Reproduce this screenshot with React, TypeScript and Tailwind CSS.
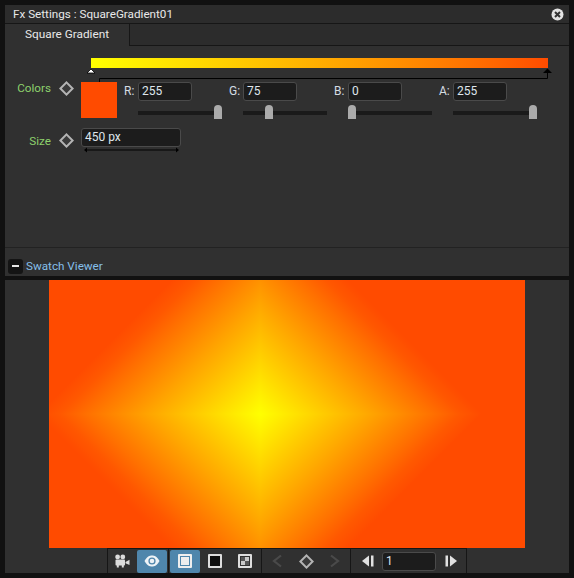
import React from "react";

const Diamond = ({ size = 15 }: { size?: number }) => (
  <svg width={size} height={size} viewBox="0 0 15 15" className="shrink-0">
    <path d="M7.5 1.4 L13.6 7.5 L7.5 13.6 L1.4 7.5 Z" fill="#3a3a3a" stroke="#b4b4b4" strokeWidth="2" />
  </svg>
);

const Field = ({ value, className }: { value: string; className: string }) => (
  <div className={`h-[19px] rounded-[3px] border border-[#4a4a4a] bg-[#1c1c1c] pl-[3px] text-[12px] leading-[17px] text-[#dfe6ec] ${className}`}>
    {value}
  </div>
);

const Channel = ({ label, value, thumb, className }: { label: string; value: string; thumb: string; className: string }) => (
  <div className={`grid grid-cols-[14px_84px] ${className}`}>
    <span className="text-[12px] leading-[19px] text-[#d5dde3]">{label}</span>
    <Field value={value} className="w-[54px]" />
    <div className="col-start-2 relative mt-[4px] h-[14px]">
      <div className="mt-[6px] h-[4px] bg-[#1a1a1a]" />
      <div className={`absolute top-0 h-[14px] w-[8px] rounded-t-[4px] bg-[#ababab] ${thumb}`} />
    </div>
  </div>
);

const TB = ({ active, children, className }: { active?: boolean; children: React.ReactNode; className: string }) => (
  <div className={`flex h-[23px] items-center justify-center rounded-[2px] ${active ? "bg-[#4f86ac]" : ""} ${className}`}>
    {children}
  </div>
);

const SquareGradient = () => {
  const stops = (
    <>
      <stop offset="0" stopColor="#ffff00" />
      <stop offset="0.5" stopColor="#ffa500" />
      <stop offset="0.78" stopColor="#ff7000" />
      <stop offset="0.9" stopColor="#ff5800" />
      <stop offset="1" stopColor="#ff4b00" />
    </>
  );
  const cx = 211;
  const cy = 134;
  const r = 222;
  return (
    <svg width="476" height="268" viewBox="0 0 476 268" className="block">
      <defs>
        <linearGradient id="q1" gradientUnits="userSpaceOnUse" x1={cx} y1={cy} x2={cx - r / 2} y2={cy - r / 2}>{stops}</linearGradient>
        <linearGradient id="q2" gradientUnits="userSpaceOnUse" x1={cx} y1={cy} x2={cx + r / 2} y2={cy - r / 2}>{stops}</linearGradient>
        <linearGradient id="q3" gradientUnits="userSpaceOnUse" x1={cx} y1={cy} x2={cx - r / 2} y2={cy + r / 2}>{stops}</linearGradient>
        <linearGradient id="q4" gradientUnits="userSpaceOnUse" x1={cx} y1={cy} x2={cx + r / 2} y2={cy + r / 2}>{stops}</linearGradient>
      </defs>
      <rect x="0" y="0" width={cx} height={cy} fill="url(#q1)" />
      <rect x={cx} y="0" width={476 - cx} height={cy} fill="url(#q2)" />
      <rect x="0" y={cy} width={cx} height={cy} fill="url(#q3)" />
      <rect x={cx} y={cy} width={476 - cx} height={cy} fill="url(#q4)" />
    </svg>
  );
};

export default function App() {
  return (
    <div className="flex h-[578px] w-[574px] flex-col gap-[4px] bg-[#111111] p-[5px] font-['Roboto','Noto_Sans',sans-serif]">
      {/* Fx settings panel */}
      <div className="flex h-[271px] flex-col bg-[#303030]">
        <div className="flex h-[19px] items-center justify-between border-b border-[#161616] bg-[#2c2c2c] pl-[8px] pr-[5px]">
          <span className="text-[11.7px] leading-[18px] text-[#e8e8e8]">Fx Settings : SquareGradient01</span>
          <svg width="13" height="13" viewBox="0 0 13 13">
            <circle cx="6.5" cy="6.5" r="6" fill="#e2e2e2" />
            <path d="M4 4 L9 9 M9 4 L4 9" stroke="#333" strokeWidth="2" />
          </svg>
        </div>
        <div className="flex h-[22px] bg-[#2c2c2c]">
          <div className="w-[124px] bg-[#303030] pl-[20px] text-[11.8px] leading-[21px] text-[#e8e8e8]">Square Gradient</div>
          <div className="flex-1 border-b border-l border-[#161616]" />
        </div>
        <div className="flex flex-1 flex-col pt-[12px]">
          {/* gradient editor */}
          <div className="relative ml-[86px] h-[24px] w-[457px]">
            <div className="h-[10px] bg-gradient-to-r from-[#ffff00] to-[#ff4b00]" />
            <svg width="470" height="26" viewBox="0 0 470 26" className="absolute left-[-8px] top-0 overflow-visible">
              <path d="M4 15 L8 11 L12 15 Z" fill="#ffffff" stroke="#000" strokeWidth="0.8" />
              <path d="M16.5 24 V20.5 H464.5 V13" fill="none" stroke="#000" strokeWidth="1" />
              <path d="M460 15 L464.5 10.5 L469 15 Z" fill="#000" />
            </svg>
          </div>
          {/* colors row */}
          <div className="flex h-[36px]">
            <div className="w-[46px] text-right text-[11.7px] leading-[12px] text-[#8dd16c]">Colors</div>
            <div className="ml-[8px] mt-[-1px] w-[22px]">
              <Diamond />
            </div>
            <div className="h-[36px] w-[36px] bg-[#ff4b00]" />
            <Channel label="R:" value="255" thumb="right-0" className="ml-[7px]" />
            <Channel label="G:" value="75" thumb="left-[22px]" className="ml-[7px]" />
            <Channel label="B:" value="0" thumb="left-0" className="ml-[7px]" />
            <Channel label="A:" value="255" thumb="right-0" className="ml-[7px]" />
          </div>
          {/* size row */}
          <div className="mt-[10px] flex h-[28px]">
            <div className="w-[46px] pt-[5px] text-right text-[11.7px] leading-[16px] text-[#8dd16c]">Size</div>
            <div className="ml-[8px] w-[22px] pt-[5px]">
              <Diamond />
            </div>
            <div className="w-[100px]">
              <Field value="450 px" className="w-[100px]" />
              <svg width="100" height="6" viewBox="0 0 100 6" className="block">
                <path d="M5 3 H96" stroke="#000" strokeWidth="1" />
                <path d="M3 3 L6 0.5 V5.5 Z M98 3 L95 0.5 V5.5 Z" fill="#000" />
              </svg>
            </div>
          </div>
          {/* swatch header */}
          <div className="mt-auto flex h-[29px] items-center gap-[3px] border-t border-[#222222] pl-[3px] pt-[8px]">
            <div className="flex h-[15px] w-[15px] items-center justify-center rounded-[3px] bg-[#141414]">
              <div className="h-[2px] w-[7px] bg-[#e8e8e8]" />
            </div>
            <span className="text-[11.7px] leading-[16px] text-[#85bfe8]">Swatch Viewer</span>
          </div>
        </div>
      </div>

      {/* viewer panel */}
      <div className="flex flex-1 flex-col items-center bg-[#303030]">
        <SquareGradient />
        <div className="flex h-[25px] w-[360px] items-stretch border-x border-t border-[#161616]">
          <div className="flex w-[154px] items-center border-r border-[#161616]">
            <TB className="w-[29px] pr-[2px]">
              <svg width="16" height="14" viewBox="0 0 16 14">
                <circle cx="3.6" cy="2.9" r="2.4" fill="#dcdcdc" />
                <circle cx="8.8" cy="2.9" r="2.4" fill="#dcdcdc" />
                <rect x="1.5" y="5.6" width="9.5" height="6" rx="0.8" fill="#dcdcdc" />
                <rect x="2.8" y="11" width="2" height="2.5" fill="#dcdcdc" />
                <rect x="7.8" y="11" width="2" height="2.5" fill="#dcdcdc" />
                <path d="M11.5 8 L15.5 5.8 V11 L11.5 9.2 Z" fill="#dcdcdc" />
              </svg>
            </TB>
            <TB active className="w-[30px]">
              <svg width="16" height="12" viewBox="0 0 16 12">
                <path d="M0.5 6 C3 1.5 5.5 0.5 8 0.5 C10.5 0.5 13 1.5 15.5 6 C13 10.5 10.5 11.5 8 11.5 C5.5 11.5 3 10.5 0.5 6 Z" fill="#eef3f7" />
                <circle cx="8" cy="6" r="3.6" fill="#4f86ac" />
                <circle cx="8" cy="6" r="2.3" fill="#eef3f7" />
              </svg>
            </TB>
            <div className="ml-[1px] h-full w-[1px] bg-[#161616]" />
            <TB active className="ml-[1px] w-[30px]">
              <div className="h-[14px] w-[14px] rounded-[1px] border-2 border-[#eeeeee] bg-[#4f86ac] p-[1px]">
                <div className="h-full w-full bg-[#eeeeee]" />
              </div>
            </TB>
            <TB className="w-[30px]">
              <div className="h-[14px] w-[14px] rounded-[1px] border-2 border-[#dddddd] bg-[#0e0e0e]" />
            </TB>
            <TB className="w-[30px]">
              <div className="grid h-[14px] w-[14px] grid-cols-2 rounded-[1px] border-2 border-[#dddddd] bg-[#303030] p-[1px]">
                <div className="bg-[#555555]" />
                <div className="bg-[#c8c8c8]" />
                <div className="bg-[#c8c8c8]" />
                <div className="bg-[#555555]" />
              </div>
            </TB>
          </div>
          <div className="flex w-[89px] items-center justify-between border-r border-[#161616] px-[9px]">
            <svg width="12" height="14" viewBox="0 0 12 14">
              <path d="M10 1.5 L3 7 L10 12.5" fill="none" stroke="#4a4a4a" strokeWidth="2.2" />
            </svg>
            <Diamond />
            <svg width="12" height="14" viewBox="0 0 12 14">
              <path d="M2 1.5 L9 7 L2 12.5" fill="none" stroke="#4a4a4a" strokeWidth="2.2" />
            </svg>
          </div>
          <div className="flex flex-1 items-center pl-[11px]">
            <svg width="12" height="12" viewBox="0 0 12 12">
              <path d="M0 6 L7 0.5 V11.5 Z" fill="#e2e2e2" />
              <rect x="9" y="0.5" width="2.5" height="11" fill="#e2e2e2" />
            </svg>
            <Field value="1" className="ml-[8px] w-[54px]" />
            <svg width="12" height="12" viewBox="0 0 12 12" className="ml-[9px]">
              <rect x="0.5" y="0.5" width="2.5" height="11" fill="#e2e2e2" />
              <path d="M12 6 L5 0.5 V11.5 Z" fill="#e2e2e2" />
            </svg>
          </div>
        </div>
      </div>
    </div>
  );
}
